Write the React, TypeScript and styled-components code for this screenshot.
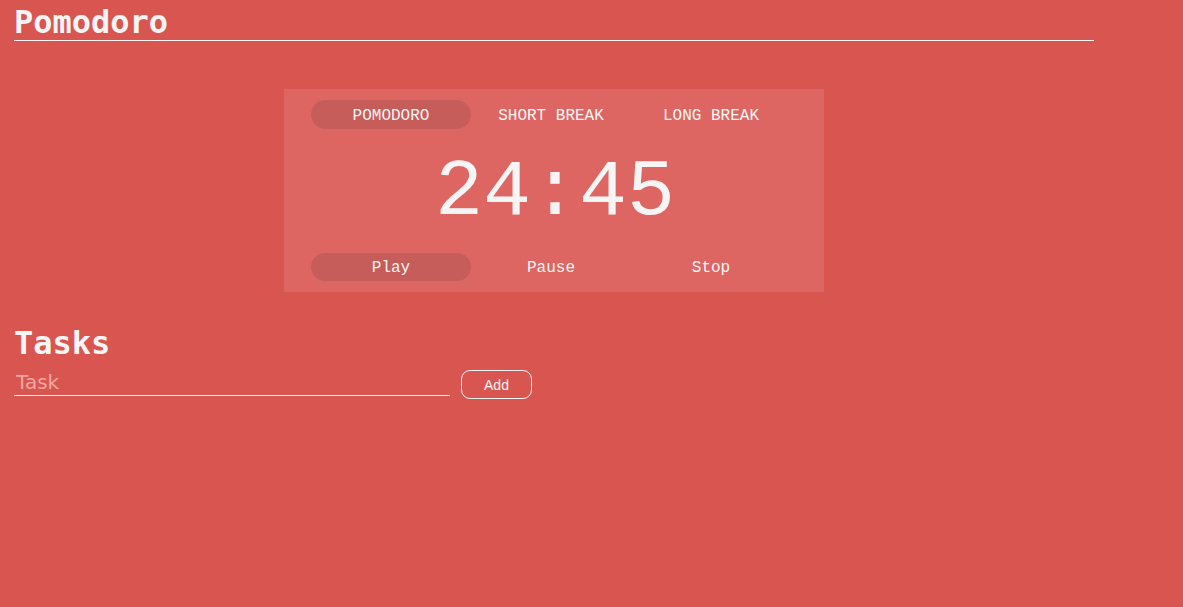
import styled, { createGlobalStyle } from "styled-components";

const GlobalStyle = createGlobalStyle`
  html, body {
    margin: 0;
    padding: 0;
    background: #d95550;
    color: #f5f5f5;
  }
`;

const Page = styled.main`
  width: 1080px;
  padding: 0 14px;
`;

const Header = styled.h1`
  margin: 0;
  padding-top: 4px;
  font-family: "DejaVu Sans Mono", monospace;
  font-size: 32px;
  font-weight: bold;
  line-height: 36px;
  border-bottom: 1px solid #f5f5f5;
`;

const Timer = styled.section`
  width: 540px;
  margin: 48px auto 0;
  box-sizing: border-box;
  padding: 11px 0 11px 27px;
  background: #dd6662;
  display: flex;
  flex-direction: column;
  font-family: "Liberation Mono", monospace;
`;

const Row = styled.div`
  display: flex;
`;

const Pill = styled.button<{ $active?: boolean; $height: number }>`
  width: 160px;
  height: ${(p) => p.$height}px;
  border: none;
  border-radius: 15px;
  background: ${(p) => (p.$active ? "#c65d5a" : "transparent")};
  color: #f5f5f5;
  font-family: "Liberation Mono", monospace;
  font-size: 16px;
  padding: 2px 0 0;
  cursor: pointer;
`;

const Clock = styled.div`
  width: 480px;
  text-align: center;
  font-size: 80px;
  line-height: 90px;
  margin: 19px 0 15px;
  padding-left: 4px;
`;

const TasksTitle = styled.h2`
  margin: 32px 0 0;
  font-family: "DejaVu Sans Mono", monospace;
  font-size: 32px;
  font-weight: bold;
  line-height: 38px;
`;

const TaskForm = styled.form`
  display: flex;
  align-items: flex-start;
  gap: 11px;
  margin-top: 8px;
`;

const TaskInput = styled.input`
  width: 436px;
  box-sizing: border-box;
  background: transparent;
  border: none;
  border-bottom: 1px solid #f5f5f5;
  outline: none;
  color: #f5f5f5;
  font-family: "DejaVu Sans", sans-serif;
  font-size: 20px;
  padding: 0 2px 1px;
  height: 26px;

  &::placeholder {
    color: #eea6a3;
  }
`;

const AddButton = styled.button`
  width: 71px;
  height: 29px;
  box-sizing: border-box;
  background: transparent;
  border: 1px solid #f5f5f5;
  border-radius: 9px;
  color: #f5f5f5;
  font-family: "Liberation Sans", Arial, sans-serif;
  font-size: 14px;
`;

const modes = ["POMODORO", "SHORT BREAK", "LONG BREAK"];
const controls = ["Play", "Pause", "Stop"];

export default function App() {
  return (
    <>
      <GlobalStyle />
      <Page>
        <Header>Pomodoro</Header>
        <Timer>
          <Row>
            {modes.map((m, i) => (
              <Pill key={m} $active={i === 0} $height={29}>
                {m}
              </Pill>
            ))}
          </Row>
          <Clock>24:45</Clock>
          <Row>
            {controls.map((c, i) => (
              <Pill key={c} $active={i === 0} $height={28}>
                {c}
              </Pill>
            ))}
          </Row>
        </Timer>
        <TasksTitle>Tasks</TasksTitle>
        <TaskForm onSubmit={(e) => e.preventDefault()}>
          <TaskInput placeholder="Task" />
          <AddButton type="submit">Add</AddButton>
        </TaskForm>
      </Page>
    </>
  );
}
